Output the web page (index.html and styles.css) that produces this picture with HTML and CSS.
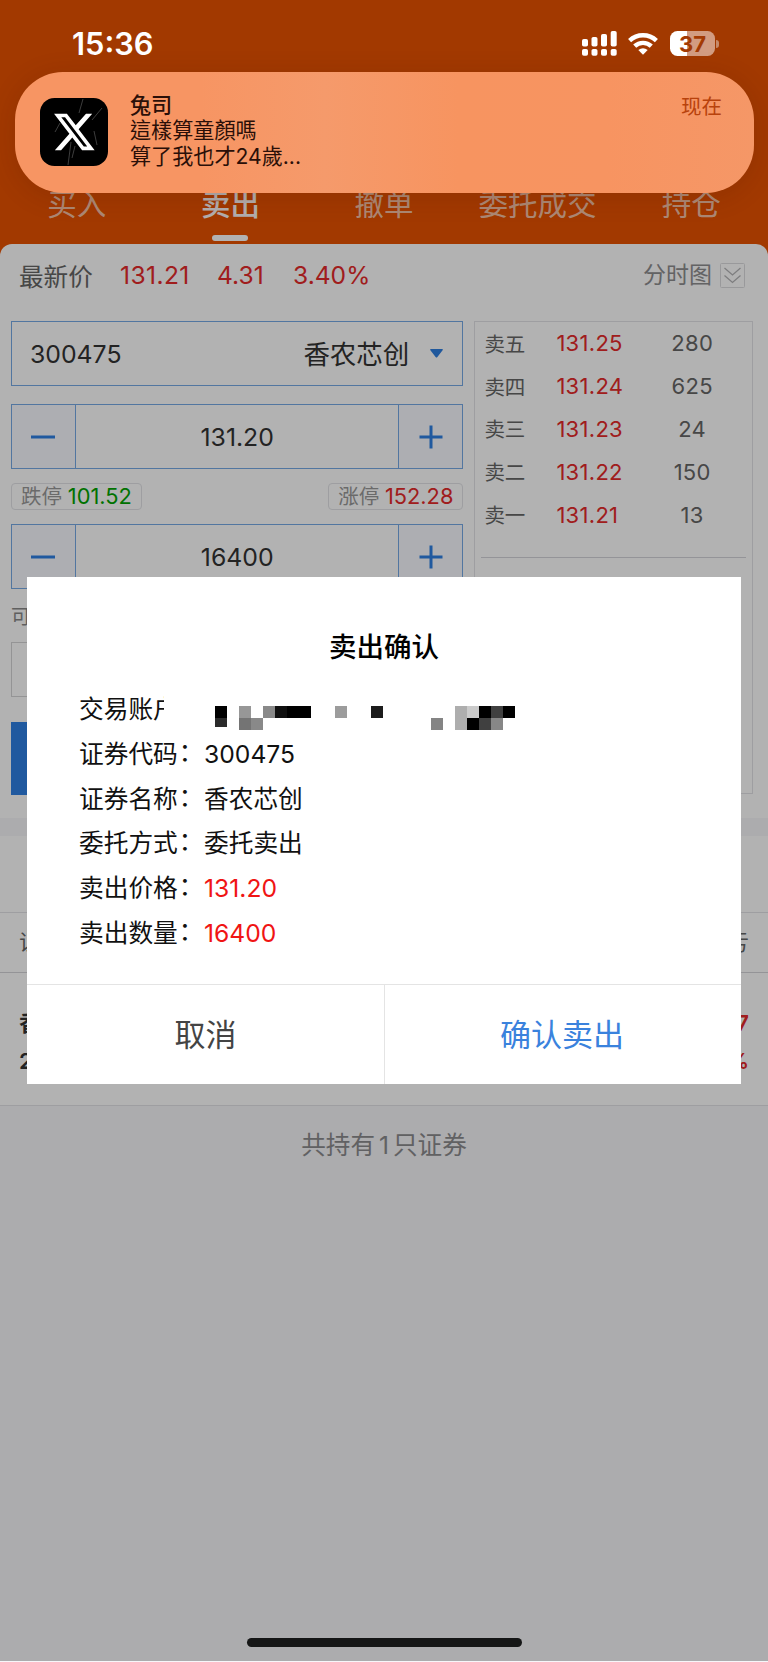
FILE: index.html
```html
<!DOCTYPE html>
<html lang="zh-CN">
<head>
  <meta charset="utf-8" />
  <title>卖出</title>
  <meta name="viewport" content="width=device-width, initial-scale=1" />
  <link rel="stylesheet" href="styles.css">
</head>
<body>
  <header class="header">
    <nav class="tabs">
      <span class="tab">买入</span>
      <span class="tab active">卖出</span>
      <span class="tab">撤单</span>
      <span class="tab">委托成交</span>
      <span class="tab">持仓</span>
    </nav>
  </header>

  <main class="panel">
    <div class="quote">
      <span class="quote-label">最新价</span>
      <span class="red q-price">131.21</span>
      <span class="red q-diff">4.31</span>
      <span class="red q-pct">3.40%</span>
      <span class="chart-link">分时图</span>
      <svg class="chart-icon" viewBox="0 0 25 25" fill="none">
        <rect x=".5" y=".5" width="24" height="24" rx="1" stroke="#dcdcde" />
        <path d="M4.500 5l8 7 8-7M4.500 12.500l8 7 8-7" stroke="#b4b4b6" stroke-width="1.300" />
      </svg>
    </div>

    <div class="trade">
      <div class="form">
        <div class="field stock">
          <span class="code">300475</span>
          <span class="name">香农芯创</span>
          <svg class="caret" viewBox="0 0 13 9"><path d="M1 0h11q1.500 0 .6 1.300L7.400 8q-.9 1.200-1.800 0L.4 1.300Q-.5 0 1 0z" fill="#2f7fe0" /></svg>
        </div>

        <div class="field stepper">
          <span class="step"><svg viewBox="0 0 24 24"><path d="M0 12h24" /></svg></span>
          <span class="value">131.20</span>
          <span class="step"><svg viewBox="0 0 24 24"><path d="M.5 12h23M12 .5v23" /></svg></span>
        </div>

        <div class="limits">
          <span class="limit">跌停 <b class="green">101.52</b></span>
          <span class="limit">涨停 <b class="red">152.28</b></span>
        </div>

        <div class="field stepper">
          <span class="step"><svg viewBox="0 0 24 24"><path d="M0 12h24" /></svg></span>
          <span class="value">16400</span>
          <span class="step"><svg viewBox="0 0 24 24"><path d="M.5 12h23M12 .5v23" /></svg></span>
        </div>

        <div class="available">可</div>
        <div class="portions"></div>
        <div class="submit"></div>
      </div>

      <div class="book">
        <div class="level"><span>卖五</span><span class="red">131.25</span><span>280</span></div>
        <div class="level"><span>卖四</span><span class="red">131.24</span><span>625</span></div>
        <div class="level"><span>卖三</span><span class="red">131.23</span><span>24</span></div>
        <div class="level"><span>卖二</span><span class="red">131.22</span><span>150</span></div>
        <div class="level"><span>卖一</span><span class="red">131.21</span><span>13</span></div>
        <div class="book-line"></div>
      </div>
    </div>
  </main>

  <section class="holdings">
    <div class="holdings-tabs"></div>
    <div class="holdings-head"><span>证</span><span>亏</span></div>
    <div class="holding">
      <div class="holding-row"><span>香</span><span class="red">7</span></div>
      <div class="holding-row"><span>2</span><span class="red">%</span></div>
    </div>
  </section>
  <p class="total">共持有<span class="count">1</span>只证券</p>

  <div class="mask"></div>

  <div class="statusbar">
    <span class="time">15:36</span>
    <svg class="signal" viewBox="0 0 35 25" fill="#fff">
      <rect x="0" y="8" width="6" height="7.500" rx="1.800" />
      <rect x="9.500" y="6" width="6" height="9.500" rx="1.800" />
      <rect x="19" y="3" width="6" height="12.500" rx="1.800" />
      <rect x="28.700" y="0" width="6" height="15.500" rx="1.800" />
      <rect x="0" y="18" width="6" height="6.800" rx="1.800" />
      <rect x="9.500" y="18" width="6" height="6.800" rx="1.800" />
      <rect x="19" y="18" width="6" height="6.800" rx="1.800" />
      <rect x="28.700" y="18" width="6" height="6.800" rx="1.800" />
    </svg>
    <svg class="wifi" viewBox="0 0 30 23" fill="none" stroke="#fff" stroke-width="4.400">
      <path d="M1.600 8.600a19.500 19.500 0 0 1 26.800 0" />
      <path d="M6.700 14.200a12 12 0 0 1 16.600 0" />
      <path d="M15 22.800l-4.700-4.900q4.700-3.400 9.400 0z" fill="#fff" stroke="none" />
    </svg>
    <span class="battery"><i>37</i></span>
    <span class="battery-cap"></span>
  </div>

  <div class="notice">
    <svg class="app-icon" viewBox="0 0 68 68">
      <rect width="68" height="68" rx="14.500" fill="#000" />
      <path d="M43 1l-4 14M31 44l-3 23M62 10l-10 12M20 25l-5 9M54 33l3 14M35 48l-3 12" stroke="#666" stroke-width=".6" />
      <path transform="translate(11.700 11.400) scale(1.880)" fill="#fff" d="M18.244 2.250h3.308l-7.227 8.260 8.502 11.240H16.170l-5.214-6.817L4.990 21.750H1.680l7.730-8.835L1.254 2.250H8.080l4.713 6.231zm-1.161 17.520h1.833L7.084 4.126H5.117z" />
    </svg>
    <div class="notice-text" lang="zh-TW">
      <strong>兔司</strong>
      <span>這樣算童顏嗎</span>
      <span>算了我也才24歲...</span>
    </div>
    <span class="notice-time">现在</span>
  </div>

  <div class="dialog">
    <h2>卖出确认</h2>
    <dl class="details">
      <div><dt class="cut">交易账户</dt>
        <dd>
          <svg class="mosaic" viewBox="0 0 300 24" shape-rendering="crispEdges">
            <path d="M0 0h12v12H0zM72 0h24v12H72z" fill="#000" />
            <path d="M0 12h12v9.500L0 20.500z" fill="#2b2b2b" />
            <path d="M24 0h12v12H24z" fill="#979797" />
            <path d="M24 12h12v12H24z" fill="#747474" />
            <path d="M36 12h12v12H36zM48 0h12v12H48z" fill="#898989" />
            <path d="M60 0h12v12H60z" fill="#101010" />
            <path d="M120 0h12v12h-12z" fill="#9c9c9c" />
            <path d="M156 0h12v12h-12z" fill="#1c1c1c" />
            <path d="M216 12h12v12h-12z" fill="#848484" />
            <path d="M240 0h12v24h-12z" fill="#aeaeae" />
            <path d="M252 0h12v12h-12z" fill="#cbcbcb" />
            <path d="M264 0h12v12h-12zM252 12h12v12h-12zM288 0h12v12h-12z" fill="#000" />
            <path d="M276 0h12v12h-12zM264 12h12v12h-12z" fill="#404040" />
            <path d="M276 12h12v12h-12z" fill="#878787" />
          </svg>
        </dd>
      </div>
      <div><dt>证券代码<span class="colon">：</span></dt><dd>300475</dd></div>
      <div><dt>证券名称<span class="colon">：</span></dt><dd>香农芯创</dd></div>
      <div><dt>委托方式<span class="colon">：</span></dt><dd>委托卖出</dd></div>
      <div><dt>卖出价格<span class="colon">：</span></dt><dd class="bright">131.20</dd></div>
      <div><dt>卖出数量<span class="colon">：</span></dt><dd class="bright">16400</dd></div>
    </dl>
    <div class="actions">
      <span class="cancel">取消</span>
      <span class="confirm">确认卖出</span>
    </div>
  </div>

  <div class="home-bar"></div>
</body>
</html>
```
FILE: styles.css
```css
:root {
  --orange: #e95200;
  --blue: #2f80e4;
  --line-blue: #76a9e6;
  --red: #e52a2a;
  --green: #00a400;
  --border: #e2e3e7;
  --bg: #f6f6f9;
}

* { box-sizing: border-box; margin: 0; padding: 0; }
body {
  position: relative;
  width: 768px;
  height: 1662px;
  overflow: hidden;
  font-family: Inter, "Noto Sans CJK SC", sans-serif;
  background: var(--bg);
  color: #333;
}

svg { display: block; }
.red { color: var(--red); }
.green { color: var(--green); }

.header {
  height: 260px;
  padding-top: 183px;
  background: var(--orange);
}

.tabs {
  display: grid;
  grid-template-columns: repeat(5, 1fr);
}

.tab {
  display: flex;
  flex-direction: column;
  align-items: center;
  font-size: 29.500px;
  line-height: 42px;
  color: rgba(255, 255, 255, .68);
}

.tab.active {
  font-weight: 500;
  color: #fffafa;
}

.tab.active::after {
  content: "";
  width: 36px;
  height: 6px;
  margin-top: 10px;
  border-radius: 3px;
  background: #fff;
}

.panel {
  position: relative;
  height: 574px;
  margin-top: -16px;
  border-radius: 12px 12px 0 0;
  background: #fff;
}

.quote {
  display: flex;
  align-items: center;
  height: 62px;
  padding: 0 23px 0 19px;
  font-size: 24.600px;
}

.quote-label { width: 101px; padding-bottom: 1px; color: #666; }
.q-price { width: 97px; letter-spacing: .4px; }
.q-diff { width: 76px; }
.chart-link {
  margin-left: auto;
  margin-right: 8px;
  font-size: 23px;
  line-height: 32px;
  color: #8e8e90;
}
.chart-icon { width: 25px; height: 25px; }

.trade {
  display: flex;
  gap: 11px;
  padding: 15px 15px 0 11px;
}

.form { width: 453px; }

.field {
  display: flex;
  align-items: center;
  height: 65px;
  border: 1px solid var(--line-blue);
  font-size: 24.800px;
}

.stock { padding: 0 19px 0 18px; margin-bottom: 18px; }
.code { flex: 1; }
.name { padding-bottom: 2px; font-size: 26.500px; }
.caret { width: 13px; height: 9px; margin-left: 21px; }

.stepper .value { flex: 1; text-align: center; }
.step {
  display: flex;
  align-items: center;
  justify-content: center;
  width: 64px;
  height: 63px;
  padding-right: 1px;
  border-right: 1px solid var(--line-blue);
  background: #f8faff;
}
.step:last-child {
  padding-right: 0;
  border-right: 0;
  border-left: 1px solid var(--line-blue);
}
.step svg { width: 24px; height: 24px; stroke: var(--blue); stroke-width: 3; }

.limits {
  display: flex;
  justify-content: space-between;
  margin: 14px 0;
}
.limit {
  height: 27px;
  padding: 0 9px;
  border: 1px solid var(--border);
  border-radius: 4px;
  font-size: 20.500px;
  line-height: 25px;
  color: #999;
}
.limit b { font-size: 21.800px; font-weight: 400; }

.available {
  height: 53px;
  font-size: 20px;
  line-height: 56px;
  color: #888;
}
.portions { height: 55px; border: 1px solid #d4d4d6; }
.submit { height: 73px; margin-top: 25px; background: #2f80e4; }

.book {
  width: 279px;
  height: 473px;
  border: 1px solid var(--border);
  font-size: 22px;
  letter-spacing: .3px;
  color: #666;
}
.level {
  display: grid;
  grid-template-columns: 72px 84px 1fr;
  align-items: center;
  height: 42.800px;
  padding: 0 8px 0 9px;
}
.level span:first-child { padding-bottom: 1px; font-size: 20.500px; letter-spacing: 0; }
.level span:last-child { text-align: center; }
.book-line { height: 1px; margin: 21px 6px 0; background: #d4d5da; }

.holdings {
  margin-top: 18px;
  background: #fff;
}
.holdings-tabs { height: 77px; border-bottom: 1px solid var(--border); }
.holdings-head {
  display: flex;
  justify-content: space-between;
  height: 60px;
  padding: 0 19px;
  border-bottom: 1px solid #d4d4d8;
  font-size: 22px;
  line-height: 58px;
  color: #666;
}
.holding {
  height: 133px;
  padding: 31px 19px 0;
  border-bottom: 1px solid var(--border);
}
.holding-row {
  display: flex;
  justify-content: space-between;
  font-size: 22px;
  font-weight: 600;
  line-height: 38px;
}

.total {
  font-size: 24.600px;
  line-height: 36px;
  padding-top: 21px;
  text-align: center;
  color: #8c8c8e;
}
.count { padding: 0 4px; }

.mask {
  position: absolute;
  inset: 0 0 1px;
  background: rgba(0, 0, 0, .3);
}

/* system layer */
.statusbar {
  position: absolute;
  top: 24px;
  left: 0;
  display: flex;
  align-items: center;
  width: 100%;
  height: 39px;
  padding: 0 49px 0 72px;
  color: #fff;
}
.time { flex: 1; font-size: 30.800px; font-weight: 600; }
.signal { width: 35px; height: 25px; margin-right: 11px; }
.wifi { width: 30px; height: 23px; margin-right: 12px; }
.battery {
  width: 45px;
  height: 25px;
  border-radius: 7.500px;
  background: linear-gradient(90deg, #fff 17px, #d29c81 17px);
  font-size: 22px;
  font-weight: 700;
  line-height: 26px;
  text-align: center;
  color: #a33a03;
}
.battery i { font-style: normal; }
.battery-cap {
  width: 3px;
  height: 8px;
  margin-left: 1px;
  border-radius: 0 3px 3px 0;
  background: #c58a6a;
}

.notice {
  position: absolute;
  top: 72px;
  left: 15px;
  display: flex;
  width: 739px;
  height: 121px;
  padding: 0 32px 0 25px;
  border-radius: 48px;
  background: linear-gradient(90deg, #f79563 0%, #f79563 25%, #f59a6b 42%, #f79460 60%, #f79461 80%, #f59767 100%);
  box-shadow: 0 4px 26px rgba(80, 20, 0, .18);
}
.app-icon { width: 68px; height: 68px; margin: 26px 22px 0 0; }
.notice-text {
  flex: 1;
  display: flex;
  flex-direction: column;
  padding-top: 21px;
  font-family: Inter, "Noto Sans CJK TC", sans-serif;
  font-size: 21.100px;
  line-height: 25.400px;
  color: #2a0f08;
}
.notice-text strong { font-weight: 500; }
.notice-time {
  padding-top: 22px;
  font-size: 20.500px;
  line-height: 26px;
  color: #b8420c;
}

.dialog {
  position: absolute;
  top: 577px;
  left: 27px;
  width: 714px;
  height: 507px;
  background: #fff;
  color: #111;
}
.dialog h2 {
  padding-top: 51px;
  font-size: 27.500px;
  font-weight: 500;
  line-height: 38px;
  text-align: center;
  color: #000;
}
.details {
  height: 318px;
  padding: 21px 0 0 52px;
  font-size: 24.700px;
}
.details > div { display: flex; height: 44.800px; line-height: 44.800px; }
.details dt { width: 125px; white-space: nowrap; }
.details dt.cut { width: 85px; overflow: hidden; }
.details .bright { color: #f01414; }
.colon { margin-left: 1px; line-height: 0; vertical-align: 2px; }
.mosaic { width: 300px; height: 24px; margin: 19px 0 0 51px; }

.actions {
  display: grid;
  grid-template-columns: 358px 1fr;
  height: 100px;
  border-top: 1px solid #e4e4e4;
  font-size: 31px;
  line-height: 99px;
  text-align: center;
}
.cancel { border-right: 1px solid #e4e4e4; color: #444; }
.confirm { padding-right: 2px; color: #3a82dd; }

.home-bar {
  position: absolute;
  bottom: 15px;
  left: 247px;
  width: 275px;
  height: 9px;
  border-radius: 5px;
  background: #151616;
}
```
